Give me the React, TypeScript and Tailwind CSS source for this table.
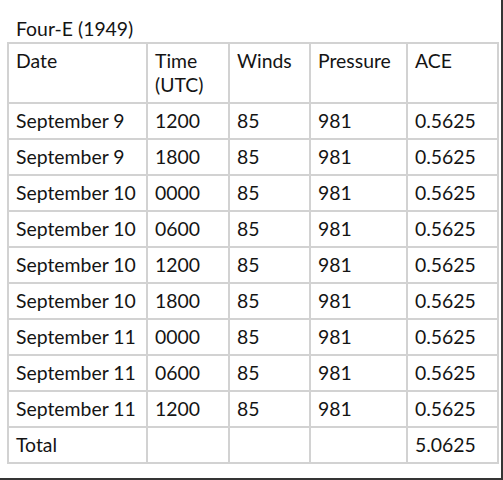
const rows = [
  ["September 9", "1200"],
  ["September 9", "1800"],
  ["September 10", "0000"],
  ["September 10", "0600"],
  ["September 10", "1200"],
  ["September 10", "1800"],
  ["September 11", "0000"],
  ["September 11", "0600"],
  ["September 11", "1200"],
];

const cell = "border-r-2 border-b-2 border-[#d2d2d2] pl-[7px] pt-[5px]";

export default function App() {
  return (
    <div
      className="w-[503px] h-[480px] bg-white border-r-2 border-b-2 border-[#353535] pl-[7px] pt-[17px] text-[19.4px] leading-[24px] text-[#141414]"
      style={{ fontFamily: "Lato, 'Open Sans', sans-serif" }}
    >
      <div className="pl-[9px] mb-px">Four-E (1949)</div>

      <div className="grid grid-cols-[139px_82px_81px_97px_91px] w-max border-l-2 border-t-2 border-[#d2d2d2]">
        {/* header */}
        <div className={`${cell} h-[60px]`}>Date</div>
        <div className={`${cell} h-[60px]`}>
          Time
          <br />
          (UTC)
        </div>
        <div className={`${cell} h-[60px]`}>Winds</div>
        <div className={`${cell} h-[60px]`}>Pressure</div>
        <div className={`${cell} h-[60px]`}>ACE</div>

        {rows.map(([date, time], i) => (
          <div key={i} className="contents">
            <div className={`${cell} h-[36px]`}>{date}</div>
            <div className={`${cell} h-[36px]`}>{time}</div>
            <div className={`${cell} h-[36px]`}>85</div>
            <div className={`${cell} h-[36px]`}>981</div>
            <div className={`${cell} h-[36px]`}>0.5625</div>
          </div>
        ))}

        {/* total */}
        <div className={`${cell} h-[36px]`}>Total</div>
        <div className={`${cell} h-[36px]`}></div>
        <div className={`${cell} h-[36px]`}></div>
        <div className={`${cell} h-[36px]`}></div>
        <div className={`${cell} h-[36px]`}>5.0625</div>
      </div>
    </div>
  );
}
